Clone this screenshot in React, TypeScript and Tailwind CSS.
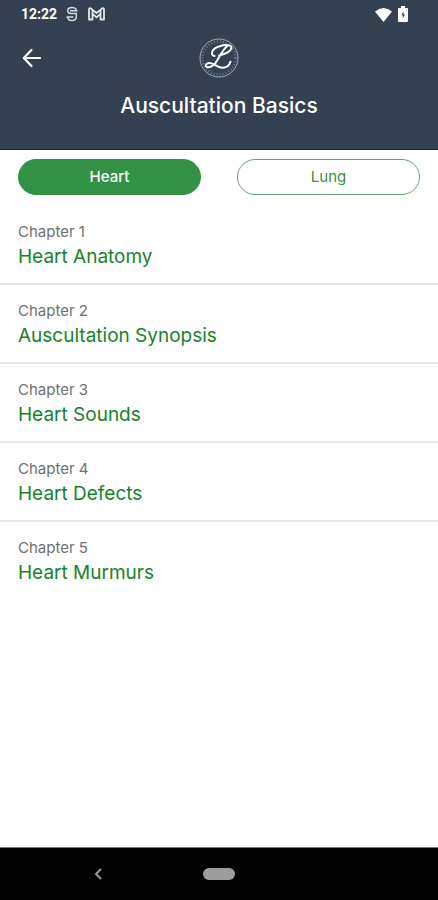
import { useState } from "react";

const chapters: Record<string, string[]> = {
  Heart: ["Heart Anatomy", "Auscultation Synopsis", "Heart Sounds", "Heart Defects", "Heart Murmurs"],
  Lung: [],
};

function StatusBar() {
  return (
    <div className="flex h-7 items-center justify-between pr-[30px] pl-[21px]">
      <div className="flex items-center">
        <span className="font-[Roboto,sans-serif] text-sm font-bold">12:22</span>
        <svg className="ml-[9px] h-4 w-3" viewBox="0 0 12 16" fill="none" stroke="#d5d9df" strokeWidth="1.5" aria-hidden="true">
          <path d="M10.300 4.500C10 2.500 8.500 1.500 6 1.500S1.700 2.700 1.700 4.800 3 7.500 5 7.500h5.300v3.500c0 2.300-1.800 3.500-4.300 3.500S1.900 13.300 1.700 11" />
          <path d="M4 4.700h7.500M.5 10.900h7" strokeWidth="1.500" />
        </svg>
        <svg className="ml-[10px] h-[14px] w-[17px]" viewBox="0 0 17 14" fill="none" stroke="#e1e4e8" strokeWidth="1.800" strokeLinejoin="round" aria-hidden="true">
          <path d="M1 12.500V2.500Q1 1 2.500 1.300L8.500 6l6-4.700Q16 1 16 2.500v10h-3.500V7l-4 3.200-4-3.200v5.500z" />
          <path d="M4.500 3v4M12.500 3v4" />
        </svg>
      </div>
      <div className="flex items-center gap-[6px]">
        <svg className="h-[15px] w-[17px]" viewBox="0 0 17 15" fill="white" aria-hidden="true">
          <path d="M0 4.500Q8.500-2.500 17 4.500L8.500 15z" />
        </svg>
        <svg className="h-4 w-[10px]" viewBox="0 0 10 16" aria-hidden="true">
          <path d="M3 0h4v2h2q1 0 1 1v12q0 1-1 1H1q-1 0-1-1V3q0-1 1-1h2z" fill="white" />
          <path d="M5.500 5.500 3.300 9.300h1.500v3L7 8.500H5.500z" fill="#334152" />
        </svg>
      </div>
    </div>
  );
}

function Logo() {
  return (
    <svg className="size-10" viewBox="0 0 40 40" fill="none" role="img" aria-label="Littmann">
      <circle cx="20" cy="20" r="19" stroke="#a3aebb" strokeWidth="1" />
      <circle cx="20" cy="20" r="16.500" stroke="#657385" strokeWidth="2.500" strokeDasharray="1.200 1.800" />
      <path
        d="M15.500 18C10.500 17 13 10.500 20 8.500c6-2 12.500-2 12.500 1 0 3.500-6.500 6.500-12.500 8M28.500 8C24 11 20.500 19 16.500 25c-2.500 3.500-6.500 5-8.800 3.800-2-1.200-.5-3.800 2.600-3.800 5 0 8.200 4.800 13.200 4.800 4 0 6.800-2.300 8-6"
        stroke="white"
        strokeWidth="2"
        strokeLinecap="round"
        strokeLinejoin="round"
      />
    </svg>
  );
}

export default function App() {
  const [tab, setTab] = useState("Heart");

  return (
    <div className="flex min-h-screen flex-col bg-white font-[Inter,sans-serif]">
      <header className="border-b border-[#1b2440] bg-[#334152] pb-[30px] text-white">
        <StatusBar />
        <div className="grid grid-cols-[1fr_auto_1fr] items-center px-[21px] pt-[10px]">
          <button type="button" aria-label="Back" className="w-fit">
            <svg className="h-[22px] w-[22px]" viewBox="0 0 22 22" fill="none" stroke="white" strokeWidth="2.200" strokeLinecap="round" strokeLinejoin="round" aria-hidden="true">
              <path d="M19 11H3M10.500 3 2.800 11l7.700 8" />
            </svg>
          </button>
          <Logo />
        </div>
        <h1 className="pt-[15px] text-center text-[21px] leading-[26px] font-medium">Auscultation Basics</h1>
      </header>

      <main className="flex-1">
        <div className="grid grid-cols-2 gap-9 px-[18px] pt-[9px]">
          {Object.keys(chapters).map((name) => (
            <button
              key={name}
              type="button"
              aria-pressed={tab === name}
              onClick={() => setTab(name)}
              className={
                tab === name
                  ? "h-9 rounded-full border border-[#329145] bg-[#329145] text-[15px] font-medium text-white"
                  : "h-9 rounded-full border border-[#62a56f] bg-white text-[15px] text-[#388e46]"
              }
            >
              {name}
            </button>
          ))}
        </div>
        <ul className="pt-[11px]">
          {chapters[tab].map((title, i) => (
            <li key={title} className="border-b-2 border-[#e8e8e8] last:border-b-0">
              <a href={`#chapter-${i + 1}`} className="block px-[18px] pt-4 pb-3">
                <span className="block text-[15px] leading-5 text-[#707070]">Chapter {i + 1}</span>
                <span className="block text-[19px] leading-[29px] text-[#178329]">{title}</span>
              </a>
            </li>
          ))}
        </ul>
      </main>

      <nav className="grid h-[53px] grid-cols-[1fr_auto_1fr] items-center border-t border-[#777777] bg-black">
        <button type="button" aria-label="System back" className="mr-2 justify-self-center">
          <svg className="h-3 w-2" viewBox="0 0 8 12" fill="none" stroke="#999999" strokeWidth="2" aria-hidden="true">
            <path d="M7 1 2 6l5 5" />
          </svg>
        </button>
        <button type="button" aria-label="Home" className="h-3 w-8 rounded-full bg-[#9c9c9c]" />
      </nav>
    </div>
  );
}
